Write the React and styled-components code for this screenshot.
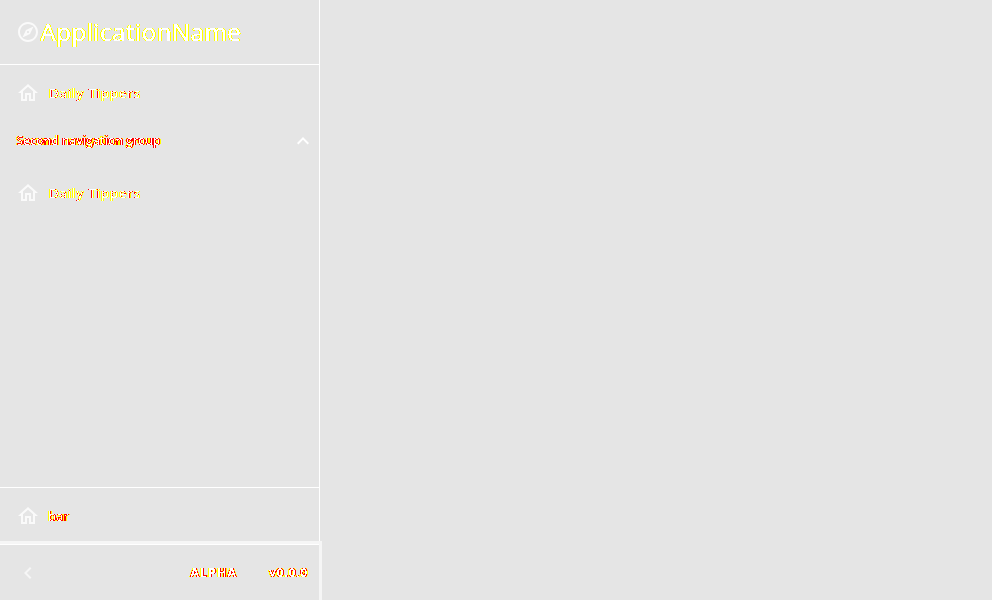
import React from "react";
import styled, { createGlobalStyle } from "styled-components";

const Global = createGlobalStyle`
  * { box-sizing: border-box; }
  body { margin: 0; background: #e5e5e5; font-family: "Open Sans", "Noto Sans", sans-serif; overflow: hidden; }
`;
const Sidebar = styled.aside`
  width: 322px; height: 600px; display: flex; flex-direction: column;
`;
const Panel = styled.div`
  width: 320px; height: 541px; display: flex; flex-direction: column;
  border-right: 1px solid #fff;
`;
const Header = styled.header`
  height: 65px; padding: 0 16px; display: flex; align-items: center;
  border-bottom: 1px solid #fff;
`;
const Nav = styled.nav`
  flex: 1; padding-top: 8px;
`;
const Row = styled.div`
  height: ${(p) => p.$height || 40}px; padding: 0 4px 0 16px;
  display: flex; align-items: center;
`;
const GroupRow = styled(Row)`
  height: 56px; justify-content: space-between; padding-right: 4px;
`;
const BottomNav = styled.div`
  height: 54px; padding-top: 1px; border-top: 1px solid #fff;
`;
const Footer = styled.footer`
  height: 59px; padding: 1px 11px 0 16px; display: flex; align-items: center;
  border-top: 3px solid #f6f6f6; border-right: 3px solid #f6f6f6;
  box-shadow: inset 0 1px #fff;
`;
const SHADOWS = {
  large: "1px 0 rgba(0,0,0,.25), -1px 0 rgba(0,0,0,.25)",
  small: "1px 0 rgba(0,0,0,.25), -1px 0 rgba(0,0,0,.15)",
  strong: "1px 0 rgba(0,0,0,.6), -1px 0 rgba(0,0,0,.3)",
};
const Text = styled.span`
  font-size: ${(p) => p.$size || 12}px;
  font-weight: ${(p) => p.$weight || 400};
  letter-spacing: ${(p) => p.$spacing || 0}px;
  margin-left: ${(p) => p.$left || 0}px;
  line-height: 18px; white-space: nowrap; color: #000;
  text-shadow: ${(p) => SHADOWS[p.$tone || "small"]};
  filter: url(#${(p) => p.$tone || "small"});
`;
const Icon = styled.svg`
  width: 24px; height: 24px; flex: none; fill: ${(p) => p.$fill || "#fafafa"};
`;
const Spacer = styled.div`flex: 1;`;
const Defs = styled.svg`position: absolute; width: 0; height: 0;`;

const ALPHA_TO_RGB = "0 0 0 1 0  0 0 0 1 0  0 0 0 1 0  0 0 0 1 0";

/* Maps glyph coverage to yellow edges, red overlaps and white cores. */
const Tone = ({ id, green, blue }) => (
  <filter id={id} colorInterpolationFilters="sRGB">
    <feColorMatrix values={ALPHA_TO_RGB} />
    <feComponentTransfer>
      <feFuncR type="discrete" tableValues="1" />
      <feFuncG type="discrete" tableValues={green} />
      <feFuncB type="discrete" tableValues={blue} />
      <feFuncA type="discrete" tableValues="0 1 1 1 1 1 1 1 1 1" />
    </feComponentTransfer>
  </filter>
);

const Home = () => (
  <Icon viewBox="0 0 24 24">
    <path d="M12 5.69l5 4.5V18h-2v-6H9v6H7v-7.81l5-4.5M12 3L2 12h3v8h6v-6h2v6h6v-8h3L12 3z" />
  </Icon>
);

export default function App() {
  return (
    <>
      <Global />
      <Defs>
        <Tone id="large" green="1" blue="0 0 0 0 0 1 1 1 1 1" />
        <Tone id="small" green="1 1 1 1 0 0 1 1 1 1" blue="0 0 0 0 0 0 .95 1 1 1" />
        <Tone id="strong" green="1 1 1 1 0 0 0 0 1 1" blue="0 0 0 0 0 0 0 0 1 1" />
      </Defs>
      <Sidebar>
        <Panel>
          <Header>
            <Icon viewBox="0 0 24 24">
              <path d="M12 2C6.48 2 2 6.48 2 12s4.48 10 10 10 10-4.48 10-10S17.52 2 12 2zm0 18c-4.41 0-8-3.59-8-8s3.59-8 8-8 8 3.59 8 8-3.59 8-8 8zm-5.5-2.5l7.51-3.49L17.5 6.5 9.99 9.99 6.5 17.5zm5.5-6.6c.61 0 1.1.49 1.1 1.1s-.49 1.1-1.1 1.1-1.1-.49-1.1-1.1.49-1.1 1.1-1.1z" />
            </Icon>
            <Text $size={24} $tone="large" $left={0.5} $spacing={0.56}>ApplicationName</Text>
          </Header>
          <Nav>
            <Row><Home /><Text $left={9} $size={13} $spacing={1.05}>Daily Tippers</Text></Row>
            <GroupRow>
              <Text $weight={600} $tone="strong" $left={0.5} $spacing={0.02}>Second navigation group</Text>
              <Icon viewBox="0 0 24 24" $fill="#fff"><path d="M7.41 15.41L12 10.83l4.59 4.58L18 14l-6-6-6 6z" /></Icon>
            </GroupRow>
            <Row $height={48}><Home /><Text $left={9} $size={13} $spacing={1.05}>Daily Tippers</Text></Row>
          </Nav>
          <BottomNav>
            <Row $height={54}><Home /><Text $left={8} $size={13} $tone="strong">bar</Text></Row>
          </BottomNav>
        </Panel>
        <Footer>
          <Icon viewBox="0 0 24 24" $fill="#f6f6f6"><path d="M15.41 7.41L14 6l-6 6 6 6 1.41-1.41L10.83 12z" /></Icon>
          <Spacer />
          <Text $size={12.5} $weight={700} $spacing={1} $tone="strong">ALPHA</Text>
          <Text $left={32} $weight={700} $spacing={0.8} $tone="strong">v0.0.0</Text>
        </Footer>
      </Sidebar>
    </>
  );
}
